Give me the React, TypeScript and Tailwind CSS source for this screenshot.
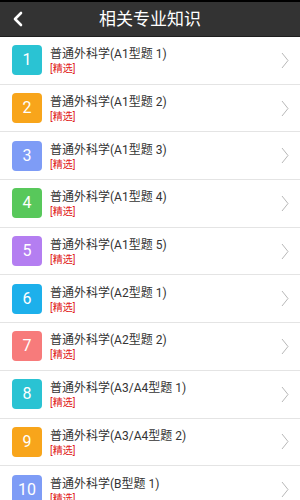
import { ChevronLeft } from "lucide-react";

const items = [
  { n: 1, title: "普通外科学(A1型题 1)", color: "bg-[#2ac3d3]" },
  { n: 2, title: "普通外科学(A1型题 2)", color: "bg-[#f8a51b]" },
  { n: 3, title: "普通外科学(A1型题 3)", color: "bg-[#7e9cf6]" },
  { n: 4, title: "普通外科学(A1型题 4)", color: "bg-[#58c85b]" },
  { n: 5, title: "普通外科学(A1型题 5)", color: "bg-[#b47ef1]" },
  { n: 6, title: "普通外科学(A2型题 1)", color: "bg-[#1db0eb]" },
  { n: 7, title: "普通外科学(A2型题 2)", color: "bg-[#f77b7b]" },
  { n: 8, title: "普通外科学(A3/A4型题 1)", color: "bg-[#2ac3d3]" },
  { n: 9, title: "普通外科学(A3/A4型题 2)", color: "bg-[#f8a51b]" },
  { n: 10, title: "普通外科学(B型题 1)", color: "bg-[#7e9cf6]" },
];

export default function App() {
  return (
    <div className="w-[300px] h-[500px] overflow-hidden bg-white font-['Roboto','Noto_Sans_CJK_SC',sans-serif]">
      <header className="h-[37px] bg-[#333333] border-t-2 border-t-black border-b border-b-[#1e1e1e] flex items-center relative">
        <ChevronLeft className="absolute left-[6px] text-white" size={24} strokeWidth={2.6} />
        <h1 className="w-full text-center text-white text-[17px] leading-none">相关专业知识</h1>
      </header>

      <ul>
        {items.map(item => (
          <li key={item.n} className="h-[47.7px] border-b-[1.5px] border-[#e4e4e4] flex items-center pl-[12px] pr-[11px]">
            <div className={`${item.color} w-[30px] h-[30px] rounded-[4px] flex items-center justify-center text-white text-[16px] shrink-0`}>
              {item.n}
            </div>
            <div className="ml-[8px] flex-1 flex flex-col pt-[2px]">
              <span className="text-[12px] leading-[15px] text-[#333]">{item.title}</span>
              <span className="text-[10px] leading-[13px] text-[#e02020]">[精选]</span>
            </div>
            <svg width="8" height="17" viewBox="0 0 8 17" className="shrink-0">
              <path d="M1 1 L7 8.5 L1 16" fill="none" stroke="#b8b8b8" strokeWidth="1" />
            </svg>
          </li>
        ))}
      </ul>
    </div>
  );
}
